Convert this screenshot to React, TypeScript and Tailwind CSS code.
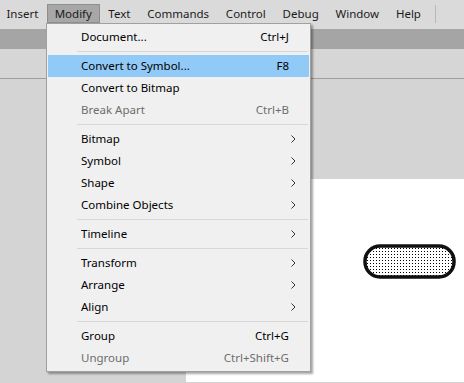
import React from 'react';

type Item =
  | { kind: 'sep' }
  | { kind: 'item'; label: string; shortcut?: string; sub?: boolean; disabled?: boolean; active?: boolean };

const MENU: Item[] = [
  { kind: 'item', label: 'Document...', shortcut: 'Ctrl+J' },
  { kind: 'sep' },
  { kind: 'item', label: 'Convert to Symbol...', shortcut: 'F8', active: true },
  { kind: 'item', label: 'Convert to Bitmap' },
  { kind: 'item', label: 'Break Apart', shortcut: 'Ctrl+B', disabled: true },
  { kind: 'sep' },
  { kind: 'item', label: 'Bitmap', sub: true },
  { kind: 'item', label: 'Symbol', sub: true },
  { kind: 'item', label: 'Shape', sub: true },
  { kind: 'item', label: 'Combine Objects', sub: true },
  { kind: 'sep' },
  { kind: 'item', label: 'Timeline', sub: true },
  { kind: 'sep' },
  { kind: 'item', label: 'Transform', sub: true },
  { kind: 'item', label: 'Arrange', sub: true },
  { kind: 'item', label: 'Align', sub: true },
  { kind: 'sep' },
  { kind: 'item', label: 'Group', shortcut: 'Ctrl+G' },
  { kind: 'item', label: 'Ungroup', shortcut: 'Ctrl+Shift+G', disabled: true },
];

const TOP = ['Insert', 'Modify', 'Text', 'Commands', 'Control', 'Debug', 'Window', 'Help'];

function Chevron() {
  return (
    <svg width="5" height="8" viewBox="0 0 5 8" className="block">
      <path d="M0.5 0.5 L4 4 L0.5 7.5" fill="none" stroke="#333" strokeWidth="1" />
    </svg>
  );
}

function Pill() {
  return (
    <svg width="93" height="35" viewBox="0 0 93 35" className="block">
      <defs>
        <pattern id="dots" width="3" height="3" patternUnits="userSpaceOnUse">
          <rect width="3" height="3" fill="#fff" />
          <rect x="1" y="1" width="1" height="1" fill="#000" />
        </pattern>
      </defs>
      <rect x="2" y="2" width="89" height="31" rx="15" fill="url(#dots)" stroke="#111" strokeWidth="3.5" />
    </svg>
  );
}

export default function App() {
  return (
    <div className="relative w-[464px] h-[383px] overflow-hidden bg-[#d4d4d4] text-black select-none" style={{ fontFamily: '"Noto Sans", "Open Sans", sans-serif' }}>
      {/* menu bar */}
      <div className="h-[29px] bg-[#dadada] flex items-start pt-[4px] text-[11.5px]">
        <div className="flex items-center -ml-[2px]">
          {TOP.map((t) => (
            <div
              key={t}
              className={
                t === 'Modify'
                  ? 'h-[19px] px-[7px] flex items-center bg-[#a7a7a7] border border-[#8e8e8e] text-[#1a1a1a]'
                  : 'h-[19px] px-[8.4px] flex items-center text-[#1a1a1a]'
              }
            >
              {t}
            </div>
          ))}
        </div>
        <div className="ml-[6px] mt-[1px] h-[18px] w-px bg-[#b8b8b8]" />
      </div>

      {/* toolbar bands */}
      <div className="h-[20px] bg-[#a5a5a5]" />
      <div className="h-[30px] bg-[#d6d6d6] border-b border-[#9f9f9f]" />

      {/* stage */}
      <div className="flex">
        <div className="w-[186px] shrink-0" />
        <div className="flex-1 flex flex-col">
          <div className="h-[100px]" />
          <div className="h-[203px] bg-white pl-[177px] pt-[65px]">
            <Pill />
          </div>
        </div>
      </div>

      {/* dropdown */}
      <div className="absolute left-[46px] top-[23px] w-[265px] bg-[#f0f0f0] border border-[#a0a0a0] shadow-[2px_2px_2px_rgba(0,0,0,0.35)] pt-[2px] pb-[2px] px-[1px] text-[11.5px]">
        {MENU.map((m, i) =>
          m.kind === 'sep' ? (
            <div key={i} className="h-[7px] flex items-center pl-[29px] pr-[1px]">
              <div className="h-px w-full bg-[#d7d7d7]" />
            </div>
          ) : (
            <div
              key={i}
              className={
                'h-[22px] flex items-center pl-[33px] pr-[13px] ' +
                (m.active ? 'bg-[#91c9f7] ' : '') +
                (m.disabled ? 'text-[#6d6d6d]' : 'text-black')
              }
            >
              <span className="flex-1">{m.label}</span>
              {m.shortcut && <span className="mr-[7px]">{m.shortcut}</span>}
              {m.sub && <Chevron />}
            </div>
          )
        )}
      </div>
    </div>
  );
}
